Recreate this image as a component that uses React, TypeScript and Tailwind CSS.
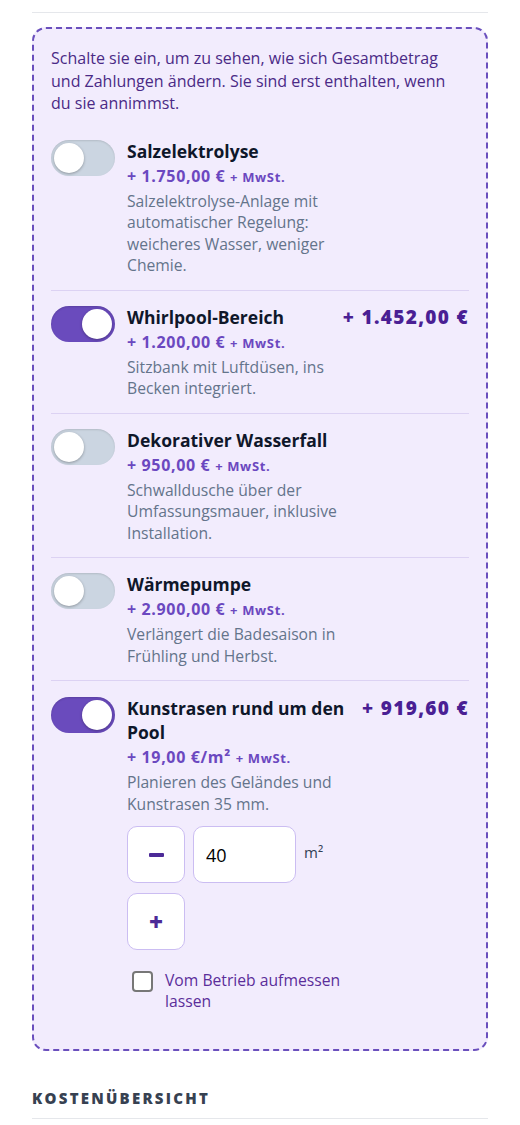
import { useState } from 'react';

type Extra = {
  id: string;
  title: string;
  price: string;
  unit?: boolean;
  desc: string;
  total?: string;
  on: boolean;
};

const extras: Extra[] = [
  {
    id: 'salz',
    title: 'Salzelektrolyse',
    price: '+ 1.750,00 €',
    desc: 'Salzelektrolyse-Anlage mit automatischer Regelung: weicheres Wasser, weniger Chemie.',
    on: false,
  },
  {
    id: 'whirl',
    title: 'Whirlpool-Bereich',
    price: '+ 1.200,00 €',
    desc: 'Sitzbank mit Luftdüsen, ins Becken integriert.',
    total: '+ 1.452,00 €',
    on: true,
  },
  {
    id: 'fall',
    title: 'Dekorativer Wasserfall',
    price: '+ 950,00 €',
    desc: 'Schwalldusche über der Umfassungsmauer, inklusive Installation.',
    on: false,
  },
  {
    id: 'pumpe',
    title: 'Wärmepumpe',
    price: '+ 2.900,00 €',
    desc: 'Verlängert die Badesaison in Frühling und Herbst.',
    on: false,
  },
  {
    id: 'rasen',
    title: 'Kunstrasen rund um den Pool',
    price: '+ 19,00 €/m²',
    unit: true,
    desc: 'Planieren des Geländes und Kunstrasen 35 mm.',
    total: '+ 919,60 €',
    on: true,
  },
];

function Toggle({ on, onClick }: { on: boolean; onClick: () => void }) {
  return (
    <button
      onClick={onClick}
      className={
        on
          ? 'relative w-16 h-9 rounded-full bg-[#6a4bbd] shadow-[inset_0_1px_2px_rgba(0,0,0,0.15)]'
          : 'relative w-16 h-9 rounded-full bg-[#cbd5e1] shadow-[inset_0_1px_2px_rgba(0,0,0,0.12)]'
      }
    >
      <span
        className={
          on
            ? 'absolute top-[3px] right-[3px] w-[30px] h-[30px] rounded-full bg-white shadow-[0_1px_3px_rgba(0,0,0,0.3)]'
            : 'absolute top-[3px] left-[3px] w-[30px] h-[30px] rounded-full bg-white shadow-[0_1px_3px_rgba(0,0,0,0.3)]'
        }
      />
    </button>
  );
}

function Stepper() {
  const [qty, setQty] = useState('40');
  const [measure, setMeasure] = useState(false);
  return (
    <div className="mt-[11px]">
      <div className="flex flex-wrap items-start gap-x-2 gap-y-[10px]">
        <button
          onClick={() => setQty(String(Math.max(0, Number(qty) - 1)))}
          className="w-[58px] h-[57px] rounded-[10px] border border-[#cbbdf2] bg-white flex items-center justify-center"
        >
          <span className="block w-[15px] h-[4px] bg-[#4c2a97] rounded-[1px]" />
        </button>
        <input
          value={qty}
          onChange={(e) => setQty(e.target.value)}
          className="w-[103px] h-[57px] rounded-[10px] border border-[#cbbdf2] bg-white px-3 text-[18px] text-black outline-none"
        />
        <span className="pt-[15px] text-[15px] text-[#334155] w-[26px]">m²</span>
        <button
          onClick={() => setQty(String(Number(qty) + 1))}
          className="w-[58px] h-[57px] rounded-[10px] border border-[#cbbdf2] bg-white flex items-center justify-center text-[24px] font-extrabold text-[#4c2a97]"
        >
          +
        </button>
      </div>
      <label className="mt-[20px] flex items-start gap-3 pl-[5px]">
        <input
          type="checkbox"
          checked={measure}
          onChange={() => setMeasure(!measure)}
          className="mt-[1px] w-[21px] h-[21px] shrink-0 appearance-none rounded-[4px] border-2 border-[#777] bg-white"
        />
        <span className="text-[15.7px] leading-[21px] text-[#5b2e9a]">Vom Betrieb aufmessen lassen</span>
      </label>
    </div>
  );
}

export default function App() {
  const [state, setState] = useState<Record<string, boolean>>(
    Object.fromEntries(extras.map((e) => [e.id, e.on]))
  );

  return (
    <div className="min-h-screen bg-white px-8 pt-3 font-['Open_Sans',sans-serif]">
      <div className="border-t border-[#e5e7eb]" />

      <div className="mt-[14px] rounded-[14px] border-2 border-dashed border-[#6a4fbd] bg-[#f2ecfd] px-[17px] pt-[18px] pb-[12px]">
        <p className="text-[16px] leading-[22.5px] text-[#4a2a86]">
          Schalte sie ein, um zu sehen, wie sich Gesamtbetrag und Zahlungen ändern. Sie sind erst enthalten, wenn du
          sie annimmst.
        </p>

        <div className="mt-[10px]">
          {extras.map((e, i) => {
            const on = state[e.id];
            return (
              <div
                key={e.id}
                className={
                  i < extras.length - 1
                    ? 'grid grid-cols-[64px_minmax(0,1fr)_auto] gap-x-3 pt-[14px] pb-[13px] border-b border-[#dcd2f3]'
                    : 'grid grid-cols-[64px_minmax(0,1fr)_auto] gap-x-3 pt-[15px] pb-[25px]'
                }
              >
                <div className="pt-[1px]">
                  <Toggle on={on} onClick={() => setState({ ...state, [e.id]: !on })} />
                </div>
                <div>
                  <div className="text-[17.5px] leading-6 font-bold text-[#0f172a]">{e.title}</div>
                  <div className="mt-[2px] text-[16px] leading-[22px] font-bold tracking-[0.04em] text-[#6b48c0]">
                    {e.price} <span className="text-[13px]">+ MwSt.</span>
                  </div>
                  <p className="mt-[3px] text-[15.7px] leading-[21.5px] text-[#64748b]">{e.desc}</p>
                  {e.unit && <Stepper />}
                </div>
                <div className="min-w-[106px] text-right whitespace-nowrap text-[19px] leading-6 font-extrabold tracking-[0.07em] text-[#4a1f94]">
                  {on ? e.total : ''}
                </div>
              </div>
            );
          })}
        </div>
      </div>

      <div className="mt-[36px] pb-2 border-b border-[#e5e7eb] text-[15px] font-extrabold tracking-[0.15em] text-[#374151]">
        KOSTENÜBERSICHT
      </div>
    </div>
  );
}
